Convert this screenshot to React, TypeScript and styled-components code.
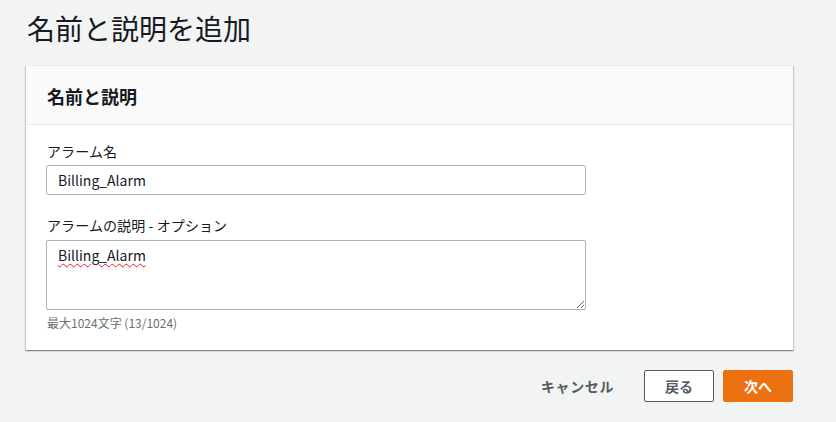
import React from "react";
import styled, { createGlobalStyle } from "styled-components";

const GlobalStyle = createGlobalStyle`
  html, body {
    margin: 0;
    padding: 0;
    background: #f2f3f3;
  }
  body {
    font-family: "Noto Sans CJK JP", "Noto Sans", sans-serif;
    color: #16191f;
  }
`;

const Page = styled.div`
  width: 767px;
  margin-left: 26px;
  padding-top: 8px;
  display: flex;
  flex-direction: column;
`;

const Title = styled.h1`
  margin: 0 0 17px 1px;
  font-size: 28px;
  line-height: 40px;
  font-weight: 400;
  color: #16191f;
`;

const Card = styled.section`
  background: #ffffff;
  border-top: 1px solid #eaeded;
  box-shadow: 0 1px 1px 0 rgba(0, 28, 36, 0.3),
    1px 1px 1px 0 rgba(0, 28, 36, 0.15), -1px 1px 1px 0 rgba(0, 28, 36, 0.15);
  display: flex;
  flex-direction: column;
`;

const CardHeader = styled.div`
  background: #fafafa;
  border-bottom: 1px solid #eaeded;
  height: 58px;
  display: flex;
  align-items: center;
  padding: 0 21px;
`;

const CardTitle = styled.h2`
  margin: 0;
  font-size: 18px;
  line-height: 22px;
  font-weight: 700;
  color: #16191f;
  padding-top: 2px;
`;

const CardBody = styled.div`
  padding: 15px 20px 19px 21px;
  display: flex;
  flex-direction: column;
`;

const Field = styled.div<{ $gap?: number }>`
  display: flex;
  flex-direction: column;
  margin-bottom: ${(p) => p.$gap ?? 0}px;
`;

const Label = styled.label<{ $mb: number }>`
  font-size: 14px;
  line-height: 22px;
  letter-spacing: 0.1px;
  color: #16191f;
  margin-bottom: ${(p) => p.$mb}px;
`;

const TextInput = styled.input`
  box-sizing: border-box;
  width: 540px;
  height: 30px;
  margin: 0 0 0 -1px;
  padding: 0 11px;
  border: 1px solid #aab7b8;
  border-radius: 2px;
  background: #ffffff;
  font-family: "Noto Sans CJK JP", "Noto Sans", sans-serif;
  font-size: 14px;
  color: #16191f;
  outline: none;
`;

const TextArea = styled.textarea`
  box-sizing: border-box;
  width: 540px;
  height: 70px;
  margin: 0 0 0 -1px;
  padding: 3px 11px;
  border: 1px solid #aab7b8;
  border-radius: 2px;
  background: #ffffff;
  font-family: "Noto Sans CJK JP", "Noto Sans", sans-serif;
  font-size: 14px;
  line-height: 22px;
  color: #16191f;
  outline: none;
  text-decoration: underline wavy #e02020;
  text-decoration-thickness: 1px;
  text-underline-offset: 2px;
`;

const Hint = styled.div`
  margin-top: 5px;
  font-size: 12px;
  line-height: 16px;
  color: #687078;
`;

const Actions = styled.div`
  margin-top: 20px;
  display: flex;
  justify-content: flex-end;
  align-items: center;
  gap: 9px;
`;

const Button = styled.button<{ $variant: "link" | "normal" | "primary" }>`
  box-sizing: border-box;
  height: 32px;
  padding: 0 ${(p) => (p.$variant === "link" ? 20 : 19)}px;
  min-width: ${(p) => (p.$variant === "link" ? 0 : 70)}px;
  font-family: "Noto Sans CJK JP", "Noto Sans", sans-serif;
  font-size: 14px;
  font-weight: 700;
  line-height: 20px;
  letter-spacing: ${(p) => (p.$variant === "link" ? "0.6px" : "0")};
  border-radius: 2px;
  cursor: pointer;
  border: 1px solid
    ${(p) =>
      p.$variant === "normal"
        ? "#545b64"
        : p.$variant === "primary"
        ? "#ec7211"
        : "transparent"};
  background: ${(p) =>
    p.$variant === "primary"
      ? "#ec7211"
      : p.$variant === "normal"
      ? "#ffffff"
      : "transparent"};
  color: ${(p) => (p.$variant === "primary" ? "#ffffff" : "#545b64")};
`;

export default function App() {
  return (
    <>
      <GlobalStyle />
      <Page>
        <Title>名前と説明を追加</Title>
        <Card>
          <CardHeader>
            <CardTitle>名前と説明</CardTitle>
          </CardHeader>
          <CardBody>
            <Field $gap={19}>
              <Label $mb={3}>アラーム名</Label>
              <TextInput defaultValue="Billing_Alarm" spellCheck={false} />
            </Field>
            <Field>
              <Label $mb={4}>アラームの説明 - オプション</Label>
              <TextArea defaultValue="Billing_Alarm" spellCheck={false} />
              <Hint>最大1024文字 (13/1024)</Hint>
            </Field>
          </CardBody>
        </Card>
        <Actions>
          <Button $variant="link">キャンセル</Button>
          <Button $variant="normal">戻る</Button>
          <Button $variant="primary">次へ</Button>
        </Actions>
      </Page>
    </>
  );
}
